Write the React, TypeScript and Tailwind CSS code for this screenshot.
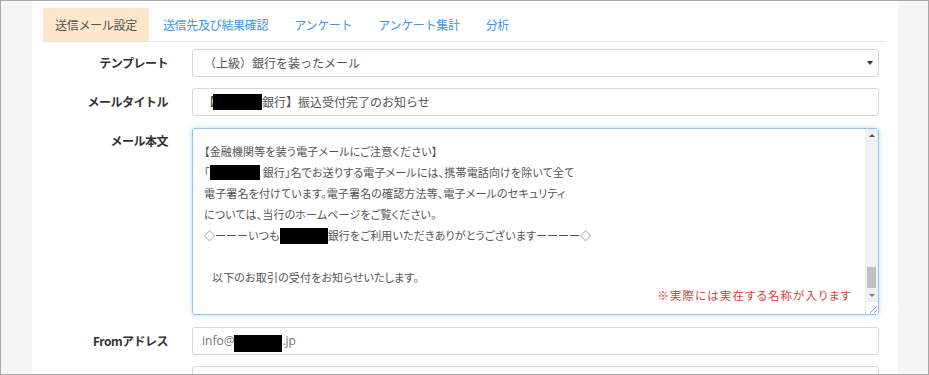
import React from "react";

const Box = ({ w, h, cls = "" }: { w: number; h: number; cls?: string }) => (
  <span
    className={`inline-block bg-black align-middle ${cls}`}
    style={{ width: w, height: h }}
  />
);

export default function App() {
  const tabs = ["送信メール設定", "送信先及び結果確認", "アンケート", "アンケート集計", "分析"];
  return (
    <div className="w-[929px] h-[375px] border border-[#a9a9a9] bg-[#f5f5f5] flex font-['Noto_Sans_CJK_JP','Noto_Sans',sans-serif] overflow-hidden">
      <div className="ml-[31px] w-[866px] h-full bg-white pl-[11px] pr-[12px] pt-[7px]">
        {/* tabs */}
        <div className="flex h-[34px] border-b border-[#e3e3e3]">
          {tabs.map((t, i) => (
            <div
              key={t}
              className={`h-[33px] px-[12px] mr-[2px] flex items-center text-[12px] tracking-[-0.3px] ${
                i === 0 ? "bg-[#fde7cb] text-[#555]" : "text-[#3d95e6]"
              }`}
            >
              {t}
            </div>
          ))}
        </div>

        <div className="pr-[7px] pt-[7px]">
          {/* template */}
          <div className="flex items-center h-[28px] gap-[24px]">
            <div className="w-[125px] text-right text-[12px] font-bold text-[#333] tracking-[-0.5px]">テンプレート</div>
            <div className="flex-1 h-full border border-[#d6d6d6] rounded-[3px] pl-[11px] pr-[5px] flex items-center text-[12px] text-[#555]">
              <span>（上級）銀行を装ったメール</span>
              <span className="ml-auto w-0 h-0 border-l-[3px] border-r-[3px] border-t-[4px] border-l-transparent border-r-transparent border-t-[#333]" />
            </div>
          </div>

          {/* title */}
          <div className="flex items-center h-[28px] gap-[24px] mt-[11px]">
            <div className="w-[125px] text-right text-[12px] font-bold text-[#333] tracking-[-0.5px]">メールタイトル</div>
            <div className="flex-1 h-full border border-[#d6d6d6] rounded-[3px] pl-[10px] flex items-center text-[12px] text-[#555]">
              <span>【</span>
              <Box w={49} h={16} cls="ml-[-2px]" />
              <span>銀行】振込受付完了のお知らせ</span>
            </div>
          </div>

          {/* body */}
          <div className="flex h-[187px] gap-[24px] mt-[12px]">
            <div className="w-[125px] pt-[4px] text-right text-[12px] font-bold text-[#333] tracking-[-0.5px]">メール本文</div>
            <div className="relative flex-1 h-full border border-[#93c4ec] rounded-[3px] shadow-[0_0_5px_rgba(102,175,233,0.45)] pl-[11px] pt-[12px] text-[11px] leading-[21px] tracking-[0.15px] text-[#555] [font-feature-settings:'palt'] whitespace-nowrap">
              <div>【金融機関等を装う電子メールにご注意ください】</div>
              <div className="flex items-center">
                <span>「</span>
                <Box w={50} h={15} />
                <span className="ml-[3px]">銀行」名でお送りする電子メールには、携帯電話向けを除いて全て</span>
              </div>
              <div>電子署名を付けています。電子署名の確認方法等、電子メールのセキュリティ</div>
              <div>については、当行のホームページをご覧ください。</div>
              <div className="flex items-center">
                <span>◇ーーーいつも</span>
                <Box w={48} h={16} />
                <span>銀行をご利用いただきありがとうございますーーーー◇</span>
              </div>
              <div>&nbsp;</div>
              <div className="pl-[8px]">以下のお取引の受付をお知らせいたします。</div>

              {/* note */}
              <div className="absolute right-[26px] bottom-[11px] text-[11.5px] leading-[16px] tracking-[1.1px] text-[#d9443a]">
                ※実際には実在する名称が入ります
              </div>

              {/* scrollbar */}
              <div className="absolute right-0 top-0 bottom-[13px] w-[13px] bg-[#f1f1f1] flex flex-col items-center">
                <span className="mt-[5px] w-0 h-0 border-l-[3px] border-r-[3px] border-b-[3px] border-l-transparent border-r-transparent border-b-[#555]" />
                <div className="mt-auto w-[9px] h-[21px] bg-[#c1c1c1]" />
                <span className="mt-[6px] mb-[4px] w-0 h-0 border-l-[3px] border-r-[3px] border-t-[3px] border-l-transparent border-r-transparent border-t-[#777]" />
              </div>
              <div className="absolute right-0 bottom-0 w-[13px] h-[13px] bg-white border-l border-t border-[#ececec]">
                <svg width="12" height="12" viewBox="0 0 12 12" className="absolute right-0 bottom-0">
                  <path d="M11 4 L4 11 M11 8 L8 11" stroke="#9a9a9a" strokeWidth="1" />
                </svg>
              </div>
            </div>
          </div>

          {/* from */}
          <div className="flex items-center h-[28px] gap-[24px] mt-[12px]">
            <div className="w-[125px] text-right text-[12px] font-bold text-[#333] tracking-[-0.5px]">Fromアドレス</div>
            <div className="flex-1 h-full border border-[#d6d6d6] rounded-[3px] pl-[9px] flex items-center text-[12px] text-[#777] font-['Open_Sans','Noto_Sans_CJK_JP',sans-serif]">
              <span>info@</span>
              <Box w={48} h={17} cls="mt-[4px]" />
              <span>.jp</span>
            </div>
          </div>

          {/* next */}
          <div className="flex h-[28px] gap-[24px] mt-[11px]">
            <div className="w-[125px]" />
            <div className="flex-1 h-full border border-[#d6d6d6] rounded-[3px]" />
          </div>
        </div>
      </div>
    </div>
  );
}
